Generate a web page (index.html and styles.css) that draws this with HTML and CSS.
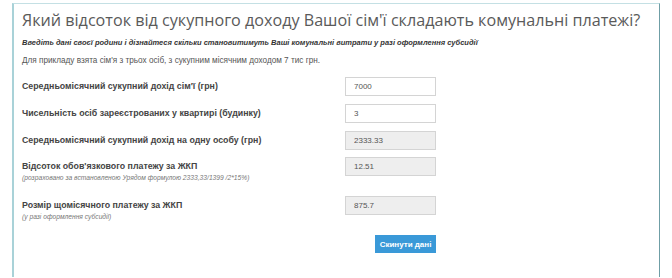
FILE: index.html
```html
<!DOCTYPE html>
<html lang="uk">
<head>
  <meta charset="UTF-8">
  <title>Калькулятор субсидії</title>
  <meta name="viewport" content="width=device-width, initial-scale=1.0">
  <link rel="stylesheet" href="styles.css">
</head>
<body>
  <div class="calc">
    <h1>Який відсоток від сукупного доходу Вашої сім'ї складають комунальні платежі?</h1>
    <p class="lead">Введіть дані своєї родини і дізнайтеся скільки становитимуть Ваші комунальні витрати у разі оформлення субсидії</p>
    <p class="example">Для прикладу взята сім'я з трьох осіб, з сукупним місячним доходом 7 тис грн.</p>

    <div class="row">
      <label for="income">Середньомісячний сукупний дохід сім'ї (грн)</label>
      <input type="text" id="income" value="7000">
    </div>
    <div class="row">
      <label for="persons">Чисельність осіб зареєстрованих у квартирі (будинку)</label>
      <input type="text" id="persons" value="3">
    </div>
    <div class="row">
      <label for="perPerson">Середньомісячний сукупний дохід на одну особу (грн)</label>
      <input type="text" id="perPerson" value="2333.33" readonly>
    </div>
    <div class="row row-note">
      <div>
        <label for="percent">Відсоток обов'язкового платежу за ЖКП</label>
        <div class="note">(розраховано за встановленою Урядом формулою 2333,33/1399 /2*15%)</div>
      </div>
      <input type="text" id="percent" value="12.51" readonly>
    </div>
    <div class="row row-note">
      <div>
        <label for="payment">Розмір щомісячного платежу за ЖКП</label>
        <div class="note">(у разі оформлення субсидії)</div>
      </div>
      <input type="text" id="payment" value="875.7" readonly>
    </div>
    <div class="row row-btn">
      <button class="button-reset" onclick="resetData()">Скинути дані</button>
    </div>
  </div>

  <script>
    function resetData() {
      document.getElementById("income").value = "";
      document.getElementById("persons").value = "";
      document.getElementById("perPerson").value = "";
      document.getElementById("percent").value = "";
      document.getElementById("payment").value = "";
    }
  </script>
</body>
</html>
```

FILE: styles.css
```css
body {
  margin: 0;
  background: #fff;
  font-family: "Liberation Sans", Arial, sans-serif;
  color: #555;
}
.calc {
  margin: 3px 0 0 12px;
  width: 637px;
  height: 268px;
  padding: 5px 0 0 8px;
  border-top: 1px solid #c4e0e4;
  border-left: 2px solid #a9d2d8;
  border-right: 1px solid #6f9ea6;
}
h1 {
  margin: 0;
  font-family: "Open Sans", sans-serif;
  font-weight: normal;
  font-size: 16.15px;
  line-height: 22px;
  color: #5a5a5a;
}
.lead {
  margin: 6px 0 0;
  font-size: 7.5px;
  line-height: 12px;
  font-weight: bold;
  font-style: italic;
  color: #333;
}
.example {
  margin: 6px 0 0;
  font-size: 8.2px;
  line-height: 12px;
  color: #555;
}
.row {
  display: grid;
  grid-template-columns: 323px 91px;
  margin-top: 8px;
}
.row:first-of-type {
  margin-top: 10px;
}
label {
  display: block;
  font-size: 8.8px;
  line-height: 19px;
  font-weight: bold;
  color: #444;
}
.note {
  margin-top: -3px;
  font-size: 6.7px;
  line-height: 10px;
  font-style: italic;
  color: #777;
}
input {
  box-sizing: border-box;
  width: 91px;
  height: 19px;
  padding: 0 8px;
  border: 1px solid #d4d4d4;
  font-family: "Liberation Sans", Arial, sans-serif;
  font-size: 8px;
  color: #555;
  background: #fff;
}
input[readonly] {
  background: #eee;
}
.row-note {
  height: 28px;
  margin-top: 7px;
}
.row-note + .row-note {
  margin-top: 11px;
}
.row-btn {
  margin-top: 11px;
}
.button-reset {
  grid-column: 2;
  justify-self: end;
  width: 61px;
  height: 18px;
  padding: 0;
  border: none;
  background: #3a99d8;
  color: #fff;
  font-family: "Liberation Sans", Arial, sans-serif;
  font-size: 8px;
  font-weight: bold;
}
```
